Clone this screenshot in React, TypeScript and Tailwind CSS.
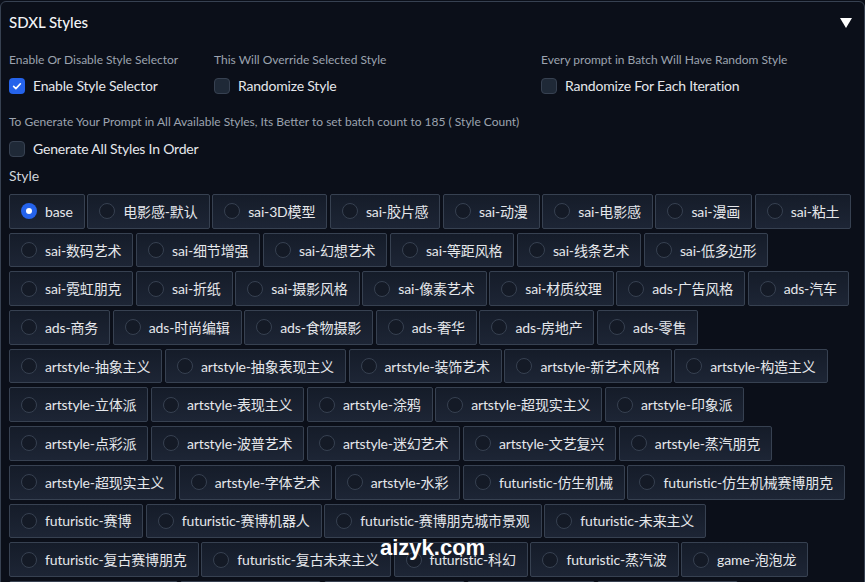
const rows: string[][] = [
  ["base", "电影感-默认", "sai-3D模型", "sai-胶片感", "sai-动漫", "sai-电影感", "sai-漫画", "sai-粘土"],
  ["sai-数码艺术", "sai-细节增强", "sai-幻想艺术", "sai-等距风格", "sai-线条艺术", "sai-低多边形"],
  ["sai-霓虹朋克", "sai-折纸", "sai-摄影风格", "sai-像素艺术", "sai-材质纹理", "ads-广告风格", "ads-汽车"],
  ["ads-商务", "ads-时尚编辑", "ads-食物摄影", "ads-奢华", "ads-房地产", "ads-零售"],
  ["artstyle-抽象主义", "artstyle-抽象表现主义", "artstyle-装饰艺术", "artstyle-新艺术风格", "artstyle-构造主义"],
  ["artstyle-立体派", "artstyle-表现主义", "artstyle-涂鸦", "artstyle-超现实主义", "artstyle-印象派"],
  ["artstyle-点彩派", "artstyle-波普艺术", "artstyle-迷幻艺术", "artstyle-文艺复兴", "artstyle-蒸汽朋克"],
  ["artstyle-超现实主义", "artstyle-字体艺术", "artstyle-水彩", "futuristic-仿生机械", "futuristic-仿生机械赛博朋克"],
  ["futuristic-赛博", "futuristic-赛博机器人", "futuristic-赛博朋克城市景观", "futuristic-未来主义"],
  ["futuristic-复古赛博朋克", "futuristic-复古未来主义", "futuristic-科幻", "futuristic-蒸汽波", "game-泡泡龙"],
  ["game-赛博朋克游戏", "game-格斗游戏", "game-侠盗猎车", "game-马里奥", "game-我的世界"],
];

function Checkbox({ checked, label }: { checked?: boolean; label: string }) {
  return (
    <label className="flex items-center gap-2 text-[14px] tracking-[-0.2px] text-[#e5e7eb]">
      {checked ? (
        <span className="flex h-4 w-4 items-center justify-center rounded-[4px] bg-[#2563eb]">
          <svg viewBox="0 0 16 16" className="h-3 w-3" fill="none" stroke="white" strokeWidth="2.2" strokeLinecap="round" strokeLinejoin="round">
            <path d="M3.5 8.5l3 3 6-6.5" />
          </svg>
        </span>
      ) : (
        <span className="h-4 w-4 rounded-[4px] border border-[#374151] bg-[#1f2937]" />
      )}
      {label}
    </label>
  );
}

function RadioItem({ label, checked }: { label: string; checked?: boolean }) {
  return (
    <div className="flex h-[34.7px] shrink-0 items-center gap-[8px] rounded-[2px] border border-[#374151] bg-gradient-to-b from-[#151c29] to-[#1d2535] px-[11px] text-[14px] tracking-[-0.15px] text-[#e5e7eb]">
      {checked ? (
        <span className="flex h-4 w-4 items-center justify-center rounded-full bg-[#2563eb]">
          <span className="h-[6px] w-[6px] rounded-full bg-white" />
        </span>
      ) : (
        <span className="h-4 w-4 rounded-full border border-[#374151] bg-[#141a26]" />
      )}
      <span className="whitespace-nowrap">{label}</span>
    </div>
  );
}

export default function App() {
  return (
    <div
      className="relative h-[582px] w-[865px] overflow-hidden bg-[#0b0f19]"
      style={{ fontFamily: 'Lato, "Noto Sans CJK SC", sans-serif' }}
    >
      <div className="mt-[1px] h-[640px] rounded-t-[6px] border border-[#374151] px-2">
        <div className="flex h-[41px] items-center justify-between">
          <span className="text-[15px] font-medium text-[#f3f4f6]">SDXL Styles</span>
          <svg viewBox="0 0 12 12" className="mr-[4px] h-[12px] w-[12px]">
            <polygon points="0,1 12,1 6,11" fill="white" />
          </svg>
        </div>

        <div className="flex">
          <div className="w-[205px]">
            <p className="h-[32px] pt-[8px] text-[12px] text-[#9ca3af]">Enable Or Disable Style Selector</p>
            <Checkbox checked label="Enable Style Selector" />
          </div>
          <div className="w-[327px]">
            <p className="h-[32px] pt-[8px] text-[12px] text-[#9ca3af]">This Will Override Selected Style</p>
            <Checkbox label="Randomize Style" />
          </div>
          <div>
            <p className="h-[32px] pt-[8px] text-[12px] text-[#9ca3af]">Every prompt in Batch Will Have Random Style</p>
            <Checkbox label="Randomize For Each Iteration" />
          </div>
        </div>

        <p className="mt-[12px] h-[30px] pt-[5px] text-[12px] text-[#9ca3af]">
          To Generate Your Prompt in All Available Styles, Its Better to set batch count to 185 ( Style Count)
        </p>
        <Checkbox label="Generate All Styles In Order" />

        <p className="mt-[2px] h-[33px] pt-[4px] text-[14px] text-[#d1d5db]">Style</p>

        <div className="flex flex-col gap-[4px]">
          {rows.map((row, i) => (
            <div key={i} className="flex gap-[2.6px]">
              {row.map((label, j) => (
                <RadioItem key={label + j} label={label} checked={i === 0 && j === 0} />
              ))}
            </div>
          ))}
        </div>
      </div>

      <span
        className="absolute left-[380px] top-[531px] text-[22px] font-bold text-white"
        style={{ fontFamily: '"Liberation Sans", sans-serif' }}
      >
        aizyk.com
      </span>
    </div>
  );
}
